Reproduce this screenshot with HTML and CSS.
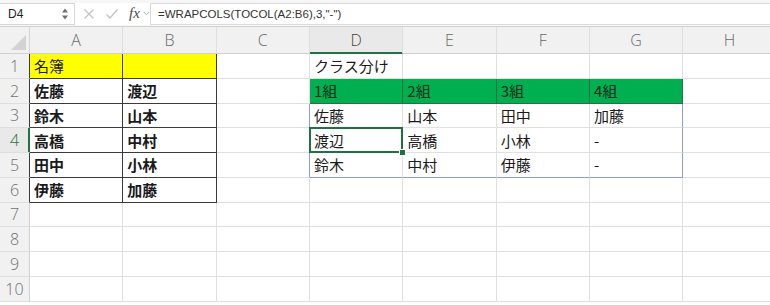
FILE: index.html
```html
<!DOCTYPE html>
<html lang="ja">
<head>
<meta charset="utf-8">
<title>WRAPCOLS</title>
<link rel="stylesheet" href="styles.css">
</head>
<body>
<div class="fbar">
  <div class="namebox">
    <span class="nb-text">D4</span>
    <svg class="stepper" width="8" height="14" viewBox="0 0 8 14"><path d="M1 5.5 L4 1.5 L7 5.5 Z" fill="#707070"/><path d="M1 8.5 L4 12.5 L7 8.5 Z" fill="#707070"/></svg>
  </div>
  <div class="ficons">
    <svg class="ico" width="12" height="12" viewBox="0 0 12 12"><path d="M1.5 1.5 L10.5 10.5 M10.5 1.5 L1.5 10.5" stroke="#c4c4c4" stroke-width="1.4" fill="none"/></svg>
    <svg class="ico" width="14" height="12" viewBox="0 0 14 12"><path d="M1.5 6.5 L5 10 L12.5 1.5" stroke="#c4c4c4" stroke-width="1.4" fill="none"/></svg>
    <span class="fx">fx</span>
    <svg class="chev" width="7" height="5" viewBox="0 0 7 5"><path d="M0.8 1 L3.5 3.8 L6.2 1" stroke="#b0b0b0" stroke-width="1" fill="none"/></svg>
  </div>
  <div class="finput">=WRAPCOLS(TOCOL(A2:B6),3,"-")</div>
</div>

<div class="sheet">
  <!-- header row -->
  <div class="h corner"><span class="tri"></span></div>
  <div class="h col">A</div>
  <div class="h col">B</div>
  <div class="h col">C</div>
  <div class="h col cur">D</div>
  <div class="h col">E</div>
  <div class="h col">F</div>
  <div class="h col">G</div>
  <div class="h col">H</div>

  <!-- row 1 -->
  <div class="h row dk">1</div>
  <div class="c k y">名簿</div>
  <div class="c k y"></div>
  <div class="c"></div>
  <div class="c">クラス分け</div>
  <div class="c"></div>
  <div class="c"></div>
  <div class="c"></div>
  <div class="c"></div>

  <!-- row 2 -->
  <div class="h row dk">2</div>
  <div class="c k b">佐藤</div>
  <div class="c k b">渡辺</div>
  <div class="c"></div>
  <div class="c g">1組</div>
  <div class="c g">2組</div>
  <div class="c g">3組</div>
  <div class="c g">4組</div>
  <div class="c"></div>

  <!-- row 3 -->
  <div class="h row dk">3</div>
  <div class="c k b">鈴木</div>
  <div class="c k b">山本</div>
  <div class="c sp-l"></div>
  <div class="c">佐藤</div>
  <div class="c">山本</div>
  <div class="c">田中</div>
  <div class="c sp-r">加藤</div>
  <div class="c"></div>

  <!-- row 4 -->
  <div class="h row cur">4</div>
  <div class="c k b">高橋</div>
  <div class="c k b">中村</div>
  <div class="c sp-l"></div>
  <div class="c sel">渡辺</div>
  <div class="c">高橋</div>
  <div class="c">小林</div>
  <div class="c sp-r">-</div>
  <div class="c"></div>

  <!-- row 5 -->
  <div class="h row dk">5</div>
  <div class="c k b">田中</div>
  <div class="c k b">小林</div>
  <div class="c sp-l"></div>
  <div class="c sp-b">鈴木</div>
  <div class="c sp-b">中村</div>
  <div class="c sp-b">伊藤</div>
  <div class="c sp-b sp-r">-</div>
  <div class="c"></div>

  <!-- row 6 -->
  <div class="h row dk">6</div>
  <div class="c k b">伊藤</div>
  <div class="c k b">加藤</div>
  <div class="c"></div>
  <div class="c"></div>
  <div class="c"></div>
  <div class="c"></div>
  <div class="c"></div>
  <div class="c"></div>

  <!-- rows 7-10 -->
  <div class="h row">7</div>
  <div class="c"></div><div class="c"></div><div class="c"></div><div class="c"></div><div class="c"></div><div class="c"></div><div class="c"></div><div class="c"></div>
  <div class="h row">8</div>
  <div class="c"></div><div class="c"></div><div class="c"></div><div class="c"></div><div class="c"></div><div class="c"></div><div class="c"></div><div class="c"></div>
  <div class="h row">9</div>
  <div class="c"></div><div class="c"></div><div class="c"></div><div class="c"></div><div class="c"></div><div class="c"></div><div class="c"></div><div class="c"></div>
  <div class="h row">10</div>
  <div class="c"></div><div class="c"></div><div class="c"></div><div class="c"></div><div class="c"></div><div class="c"></div><div class="c"></div><div class="c"></div>
</div>
</body>
</html>
```

FILE: styles.css
```css
html, body {
  margin: 0;
  padding: 0;
  background: #ffffff;
  overflow: hidden;
}

body {
  width: 770px;
  height: 305px;
  font-family: "Liberation Sans", "Noto Sans CJK JP", sans-serif;
}

/* ---------- formula bar ---------- */
.fbar {
  height: 27px;
  box-sizing: border-box;
  display: flex;
  align-items: center;
  background: #f6f6f6;
  border-bottom: 1px solid #d2d2d2;
  padding-top: 1px;
}

.namebox {
  width: 75px;
  height: 22px;
  box-sizing: border-box;
  background: #ffffff;
  border: 1px solid #d6d6d6;
  border-left: none;
  display: flex;
  align-items: center;
  justify-content: space-between;
  padding: 0 5px 0 8px;
}

.nb-text {
  font-size: 12px;
  color: #222;
}

.stepper {
  display: block;
}

.ficons {
  flex: 0 0 auto;
  width: 75px;
  height: 22px;
  display: flex;
  align-items: center;
  padding-left: 8px;
  box-sizing: border-box;
  background: #ffffff;
}

.ico {
  display: block;
  margin-right: 10px;
}

.fx {
  font-family: "Liberation Serif", "DejaVu Serif", serif;
  font-style: italic;
  font-size: 15px;
  color: #4a4a4a;
  margin-right: 3px;
  line-height: 1;
}

.chev {
  display: block;
}

.finput {
  flex: 1;
  height: 22px;
  box-sizing: border-box;
  background: #ffffff;
  border: 1px solid #dcdcdc;
  border-right: none;
  padding-left: 7px;
  font-size: 11.5px;
  color: #333;
  display: flex;
  align-items: center;
}

/* ---------- sheet grid ---------- */
.sheet {
  display: grid;
  grid-template-columns: 30px repeat(8, 93.333px);
  grid-template-rows: 27px repeat(10, 24.75px);
  width: 800px;
}

.h {
  box-sizing: border-box;
  background: #f1f1f1;
  color: #6a6a6a;
  font-family: "Open Sans", "Liberation Sans", sans-serif;
  font-weight: 300;
  font-size: 16px;
  display: flex;
  align-items: center;
  justify-content: center;
  border-right: 1px solid #d6d6d6;
  border-bottom: 1px solid #d6d6d6;
}

.h.col {
  border-right-color: #dedede;
  border-bottom-color: #cfcfcf;
}

.h.col.cur {
  background: #e9e9e9;
  color: #3f3f3f;
  border-bottom-color: #217346;
  box-shadow: inset 0 -1px 0 #217346;
}

.h.row {
  border-bottom-color: #dedede;
  border-right-color: #cfcfcf;
  color: #707070;
}

.h.row.dk {
  border-right-color: #3a3a3a;
}

.h.row.cur {
  background: #e9e9e9;
  color: #217346;
  border-right-color: #217346;
  box-shadow: inset -1px 0 0 #217346;
}

.corner {
  position: relative;
  border-bottom-color: #cfcfcf;
}

.tri {
  position: absolute;
  right: 3px;
  bottom: 3px;
  width: 15px;
  height: 15px;
  background: #d3d3d3;
  clip-path: polygon(100% 0, 100% 100%, 0 100%);
}

.c {
  box-sizing: border-box;
  border-right: 1px solid #e0e0e0;
  border-bottom: 1px solid #e0e0e0;
  font-family: "Noto Sans CJK JP", "Liberation Sans", sans-serif;
  font-size: 15px;
  color: #1a1a1a;
  display: flex;
  align-items: center;
  padding-left: 4px;
  white-space: nowrap;
}

.c.k {
  border-right-color: #3a3a3a;
  border-bottom-color: #3a3a3a;
}

.c.b {
  font-weight: 600;
}

.c.y {
  background: #ffff00;
}

.c.g {
  background: #00b050;
  border-right-color: #2c6e44;
  border-bottom-color: #2c6e44;
  color: #0d2b18;
}

/* spill range outline */
.c.sp-l {
  border-right-color: #8e9bd8;
}

.c.sp-r {
  border-right-color: #8e9bd8;
}

.c.sp-b {
  border-bottom-color: #8e9bd8;
}

/* active cell */
.c.sel {
  position: relative;
}

.c.sel::before {
  content: "";
  position: absolute;
  left: -1px;
  top: -1px;
  right: -1px;
  bottom: -1px;
  border: 2px solid #1e7145;
  pointer-events: none;
}

.c.sel::after {
  content: "";
  position: absolute;
  right: -4px;
  bottom: -4px;
  width: 5px;
  height: 5px;
  background: #1e7145;
  border: 1px solid #ffffff;
  z-index: 2;
}
```
